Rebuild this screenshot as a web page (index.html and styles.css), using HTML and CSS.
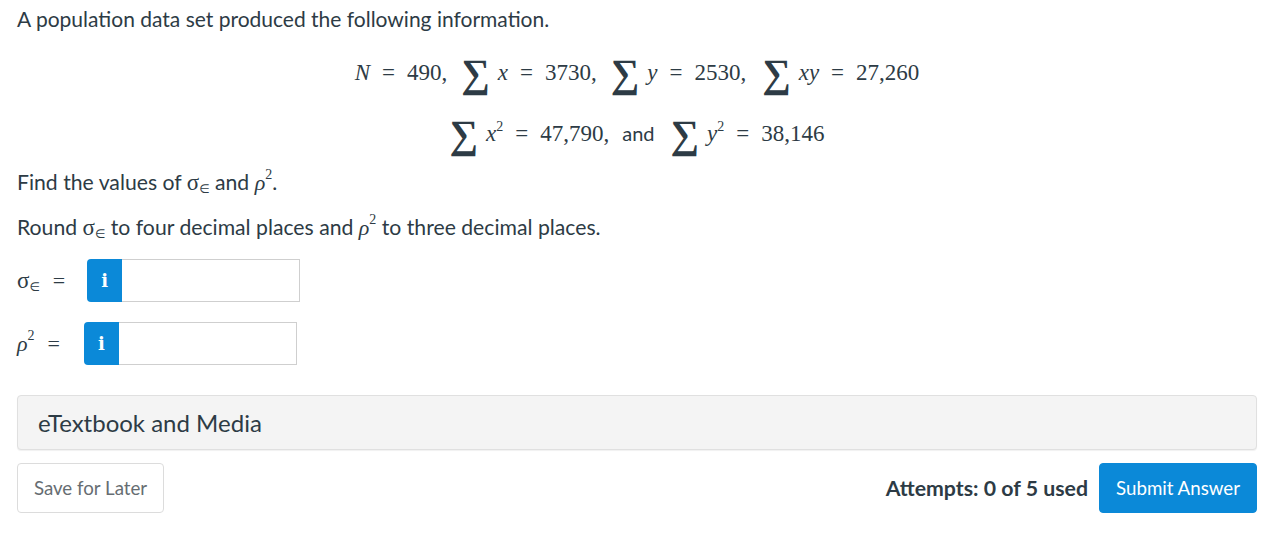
FILE: index.html
```html
<!DOCTYPE html>
<html>
<head lang="en">
    <meta charset="UTF-8">
    <title>Question</title>
    <link rel="stylesheet" href="styles.css">
</head>
<body>
    <div id="question">
        <p class="intro">A population data set produced the following information.</p>
        <div class="equations">
            <div class="eq">
                <i>N</i><span class="op">=</span>490,<span class="sum">&sum;</span><i>x</i><span class="op">=</span>3730,<span class="sum">&sum;</span><i>y</i><span class="op">=</span>2530<span class="sp">,</span><span class="sum">&sum;</span><i>xy</i><span class="op">=</span>27,260
            </div>
            <div class="eq">
                <span class="sum first">&sum;</span><i>x</i><sup>2</sup><span class="op">=</span>47,790,<span class="word">and</span><span class="sum">&sum;</span><i>y</i><sup>2</sup><span class="op">=</span>38,146
            </div>
        </div>
        <p class="text find">Find the values of <span class="sig">&sigma;</span><sub>&isin;</sub> and <i class="rho">&rho;</i><sup>2</sup>.</p>
        <p class="text round">Round <span class="sig">&sigma;</span><sub>&isin;</sub> to four decimal places and <i class="rho">&rho;</i><sup>2</sup> to three decimal places.</p>

        <div class="answer first">
            <span class="label"><span class="sig">&sigma;</span><sub>&isin;</sub><span class="op">=</span></span>
            <span class="field">
                <span class="info">i</span>
                <input type="text"/>
            </span>
        </div>
        <div class="answer">
            <span class="label wide"><i class="rho">&rho;</i><sup>2</sup><span class="op">=</span></span>
            <span class="field">
                <span class="info">i</span>
                <input type="text"/>
            </span>
        </div>

        <div class="media">eTextbook and Media</div>

        <div class="footer">
            <span class="button save">Save for Later</span>
            <span class="attempts">Attempts: 0 of 5 used</span>
            <span class="button submit">Submit Answer</span>
        </div>
    </div>
</body>
</html>
```

FILE: styles.css
```css
*{padding:0;margin:0;box-sizing:border-box;}
body{font-family:Lato,"Liberation Sans",sans-serif;color:#2d3b45;background:#fff;}
#question{padding:7px 17px 0 17px;}
.intro{font-size:21px;line-height:24px;}

.equations{margin-top:22px;font-family:"Liberation Serif","Times New Roman",serif;font-size:23px;color:#2d3b45;}
.eq{height:40px;line-height:40px;text-align:center;white-space:nowrap;}
.eq + .eq{margin-top:20px;}
.eq .op{margin:0 12px;}
.eq .sp{margin-right:2px;}
.eq .sum{font-size:40px;font-weight:bold;font-family:"Liberation Serif","DejaVu Serif",serif;vertical-align:-7px;margin:0 8px 0 14px;line-height:20px;}
.eq .sum.first{margin-left:0;}
.eq i{font-style:italic;}
.eq sup{font-size:14px;vertical-align:10px;line-height:0;}
.eq .word{font-family:Lato,"Liberation Sans",sans-serif;font-size:20px;margin:0 2px 0 13px;}

.text{font-size:21.2px;line-height:24px;}
.find{margin-top:17px;}
.round{margin-top:20px;}
.sig{font-family:"Liberation Serif",serif;font-size:23px;}
sub{font-family:"DejaVu Sans",sans-serif;font-size:12px;vertical-align:-3px;line-height:0;}
.rho{font-family:"Liberation Serif",serif;font-size:22px;}
.text sup,.label sup{font-family:"Liberation Serif",serif;font-size:14px;vertical-align:11px;line-height:0;}

.answer{display:flex;align-items:center;margin-top:20px;height:43px;}
.answer.first{margin-top:19px;}
.label{display:inline-block;font-size:21px;line-height:24px;color:#2d3b45;margin-right:22px;white-space:nowrap;}
.label.wide{margin-right:24px;}
.label .op{font-family:"Liberation Serif",serif;margin-left:13px;font-size:22px;}
.field{display:flex;height:43px;}
.info{width:35px;background:#0b89d8;color:#fff;border-radius:4px 0 0 4px;font-family:"DejaVu Serif",serif;font-weight:bold;font-size:18px;display:flex;align-items:center;justify-content:center;}
.field input{width:178px;height:43px;border:1px solid #cfcfcf;border-left:none;font-size:16px;padding:0 8px;outline:none;}

.media{margin-top:30px;height:55px;line-height:53px;background:#f4f4f4;border:1px solid #e0e0e0;border-radius:4px;padding-left:20px;font-size:24px;color:#2d3b45;box-shadow:0 1px 1px rgba(0,0,0,0.06);}

.footer{display:flex;align-items:center;margin-top:13px;}
.button{display:inline-block;height:50px;line-height:48px;border-radius:4px;font-size:18.7px;text-align:center;cursor:pointer;}
.save{width:147px;border:1px solid #dcdcdc;color:#666d72;background:#fff;}
.attempts{margin-left:auto;margin-right:11px;font-size:21.3px;font-weight:bold;color:#2d3b45;}
.submit{width:158px;border:1px solid #0b89d8;background:#0b89d8;color:#fff;}
```
